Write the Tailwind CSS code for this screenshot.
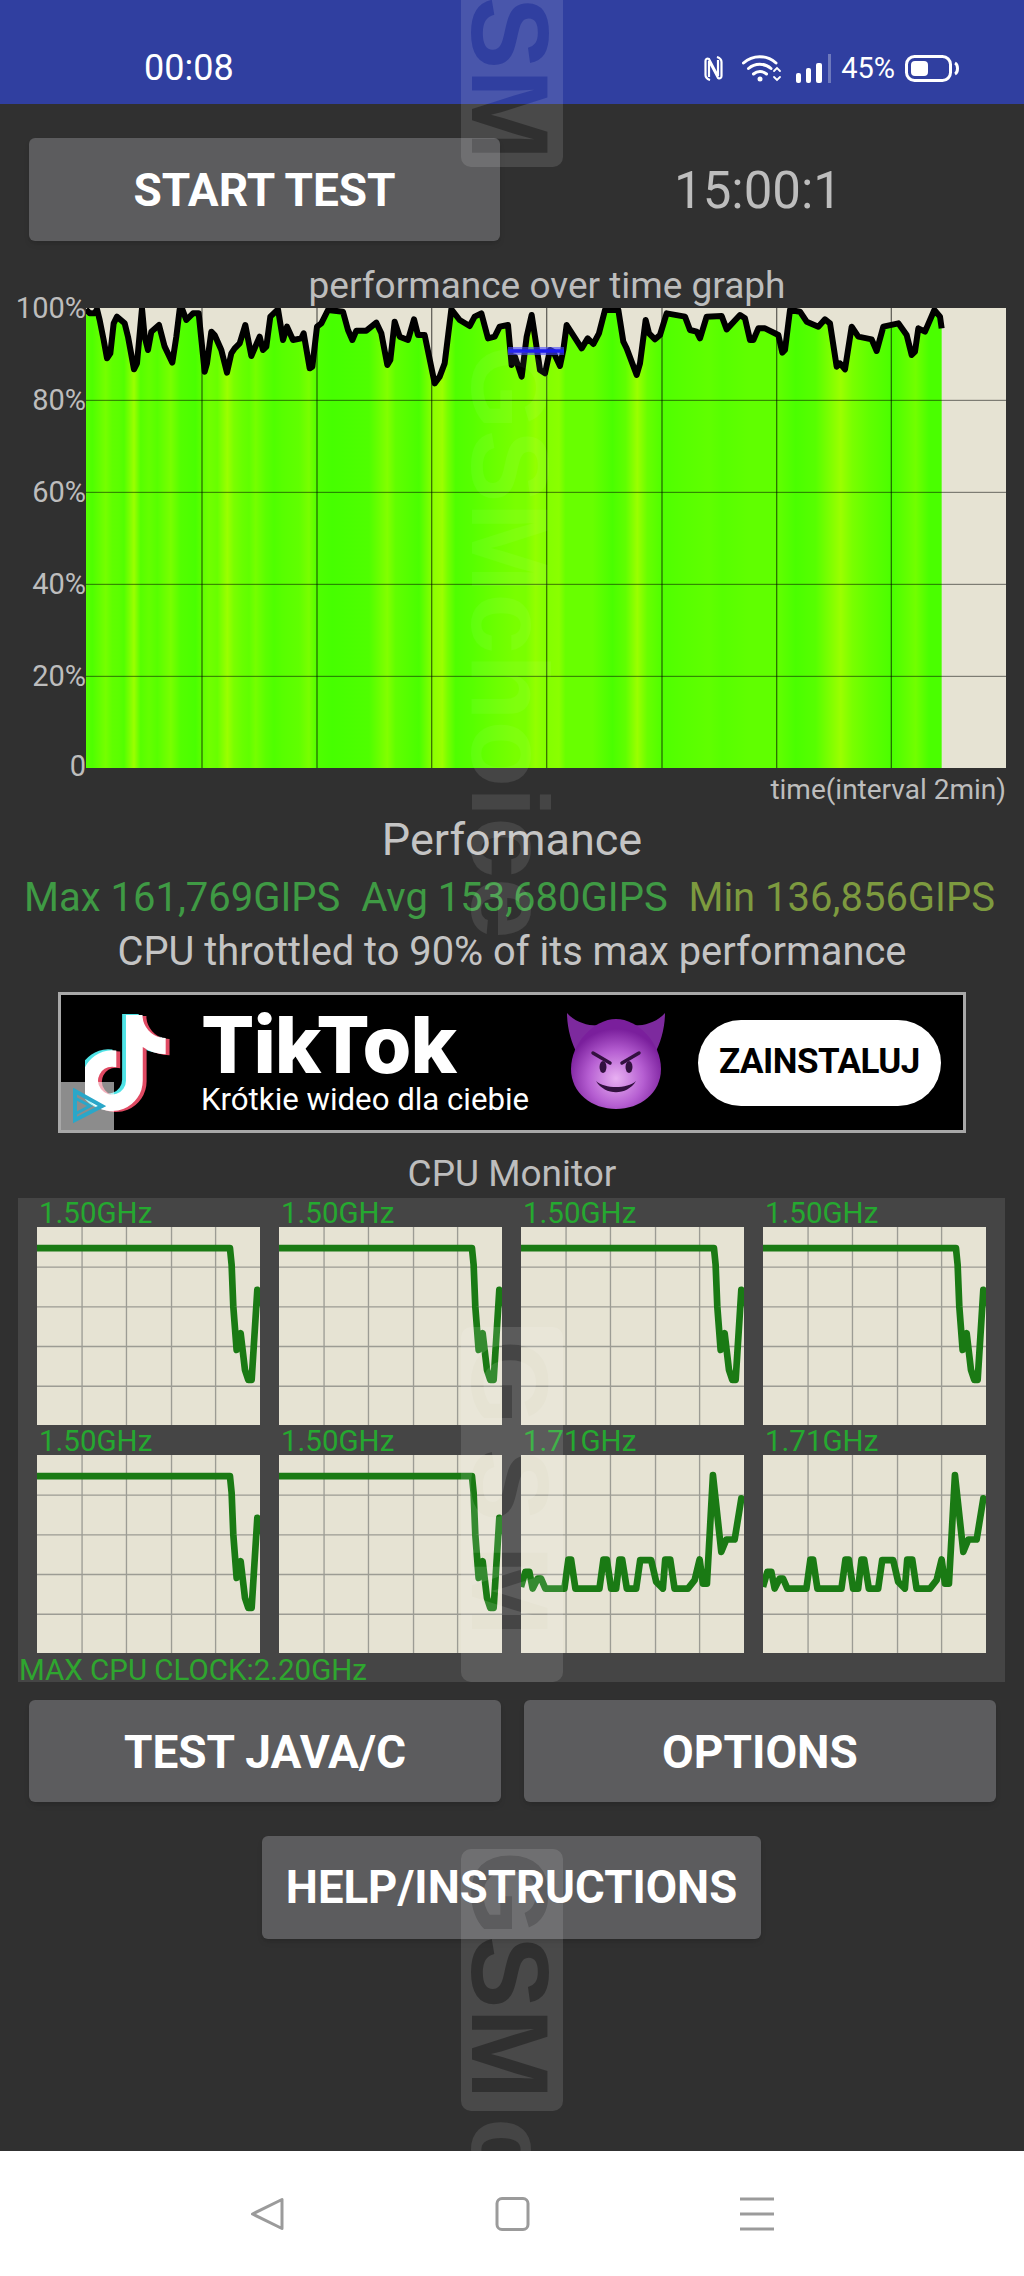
<!DOCTYPE html>
<html lang="en">

<head>
  <meta charset="UTF-8">
  <meta name="viewport" content="width=device-width, initial-scale=1.0">
  <title>CPU Throttling Test</title>
  <script src="https://cdn.jsdelivr.net/npm/@tailwindcss/browser@4"></script>
</head>

<body class="bg-[#303030] font-['Roboto',sans-serif]">
  <div class="relative w-[1024px] h-[2276px] overflow-hidden flex flex-col">

    <!-- shared cpu chart parts -->
    <svg class="absolute w-0 h-0">
      <defs>
        <g id="cpu-grid" stroke="#9c9c94" stroke-width="4" fill="none">
          <path d="M135 0V593M268 0V593M403 0V593M535 0V593M0 120H668M0 239H668M0 358H668M0 477H668" />
        </g>
        <path id="cpu-a" fill="none" stroke="#1a7a14" stroke-width="20" stroke-linejoin="round"
          d="M0 63H578L583 113L588 238L598 368L610 318L623 428L633 458H643L660 188L668 238" />
        <path id="cpu-b" fill="none" stroke="#1a7a14" stroke-width="20" stroke-linejoin="round"
          d="M0 395L13 350H25L35 400L50 370H60L73 400H130L142 313H150L163 400H235L247 313H257L270 400H285L295 313H303L317 400H345L357 315H390L405 380L425 400L432 313H447L460 400H500L520 375L535 313L545 385H557L575 60L600 290L615 253H640L660 130L668 135" />
      </defs>
    </svg>

    <!-- status bar -->
    <div class="h-[104px] shrink-0 bg-[#303fa0] flex items-center pt-[32px] pl-[144px] pr-[65px] text-white">
      <span class="text-[36px] leading-none">00:08</span>
      <div class="ml-auto flex items-center">
        <svg width="21" height="25" viewBox="0 0 21 25" fill="none" stroke="white" stroke-width="2.2">
          <path d="M7 24C4 23 2.5 22 2.5 19V5C2.5 3 4 2 6 3L15 20V4" />
          <path d="M14 1C17 2 18.5 3 18.5 6V20C18.5 22 17 23 15 22L6 5V21" />
        </svg>
        <svg class="ml-[18px]" width="40" height="27" viewBox="0 0 40 27" fill="none" stroke="white" stroke-width="3"
          stroke-linecap="round">
          <path d="M1.5 8A24 24 0 0 1 34 8" />
          <path d="M6.5 13.5A17 17 0 0 1 29 13.5" />
          <path d="M11.5 19A10 10 0 0 1 24.5 19" />
          <circle cx="18" cy="24" r="2.5" fill="white" stroke="none" />
          <path d="M32 16L35 13L38 16M32 22L35 25L38 22" stroke-width="1.8" />
        </svg>
        <svg class="ml-[14px]" width="35" height="29" viewBox="0 0 35 29" fill="white">
          <rect x="0" y="19" width="5" height="10" rx="2" />
          <rect x="10" y="14" width="5" height="15" rx="2" />
          <rect x="20" y="9" width="6" height="20" rx="2" />
          <rect x="32" y="0" width="3" height="29" fill-opacity="0.3" />
        </svg>
        <span class="ml-[10px] text-[29px] leading-none">45%</span>
        <svg class="ml-[10px]" width="54" height="27" viewBox="0 0 54 27" fill="none">
          <rect x="1.5" y="1.5" width="44" height="24" rx="8" stroke="white" stroke-width="3" />
          <rect x="6" y="6" width="17" height="15" rx="4" fill="white" />
          <path d="M50 8C52 9 52.5 11 52.5 13.5C52.5 16 52 18 50 19" stroke="white" stroke-width="3" />
        </svg>
      </div>
    </div>

    <!-- watermark -->
    <svg class="absolute left-0 top-0 z-10 pointer-events-none" width="1024" height="2151" viewBox="0 0 1024 2151">
      <mask id="wm-bands" maskUnits="userSpaceOnUse" x="0" y="0" width="1024" height="2151">
        <rect x="461" y="-20" width="102" height="187" rx="10" fill="white" />
        <rect x="461" y="1327" width="102" height="355" rx="10" fill="white" />
        <rect x="461" y="1849" width="102" height="262" rx="10" fill="white" />
        <g font-family="Liberation Sans" font-weight="700" font-size="109" fill="black">
          <text transform="translate(472,160) rotate(90)" text-anchor="end">GSM</text>
          <text transform="translate(472,1340) rotate(90)" letter-spacing="24">GSM</text>
          <text transform="translate(472,1851) rotate(90)">GSM</text>
        </g>
      </mask>
      <clipPath id="wm-on-graph"><rect width="1024" height="768" /></clipPath>
      <clipPath id="wm-on-dark"><rect y="768" width="1024" height="1383" /></clipPath>
      <rect width="1024" height="2151" fill="white" fill-opacity="0.12" mask="url(#wm-bands)" />
      <g font-family="Liberation Sans" font-weight="700" font-size="109" fill="white">
        <g clip-path="url(#wm-on-graph)" fill-opacity="0.05">
          <text transform="translate(472,345) rotate(90)">GSMchoice</text>
        </g>
        <g clip-path="url(#wm-on-dark)" fill-opacity="0.1">
          <text transform="translate(472,345) rotate(90)">GSMchoice</text>
          <text transform="translate(472,2118) rotate(90)">c</text>
        </g>
      </g>
    </svg>

    <!-- main area -->
    <div class="flex-1 flex flex-col bg-[#303030]">
      <div class="mt-[34px] pl-[29px] pr-[28px] flex items-center">
        <button class="w-[471px] h-[103px] pt-[2px] bg-[#5c5c5e] rounded-[6px] shadow-md text-white font-bold text-[46px]">START TEST</button>
        <div class="flex-1 pl-[20px] pt-[2px] text-center text-[#bdbdbd] text-[51px] leading-none">15:00:1</div>
      </div>

      <div class="mt-[25px] mb-[2px] h-[40px] pl-[70px] text-center text-[#bdbdbd] text-[37px] leading-[40px]">performance over time graph</div>

      <!-- performance graph -->
      <div class="flex h-[460px]">
        <div class="w-[86px] shrink-0 flex flex-col justify-between text-right text-[#bdbdbd] text-[29px]">
          <div class="h-0 leading-0">100%</div>
          <div class="h-0 leading-0">80%</div>
          <div class="h-0 leading-0">60%</div>
          <div class="h-0 leading-0">40%</div>
          <div class="h-0 leading-0">20%</div>
          <div class="h-0 leading-0 -translate-y-[2px]">0</div>
        </div>
        <svg width="920" height="460" viewBox="259 114 2760 1380" class="block">
          <defs>
            <linearGradient id="stripes" gradientUnits="userSpaceOnUse" x1="258" y1="0" x2="2838" y2="0"></linearGradient>
            <clipPath id="plot">
              <rect x="259" y="114" width="2760" height="1380" />
            </clipPath>
          </defs>
          <rect x="259" y="114" width="2760" height="1380" fill="#e6e3d3" />
          <path id="area" fill="url(#stripes)" />
          <g stroke="#000" stroke-opacity="0.55" stroke-width="3">
            <path d="M259 391H3019M259 667H3019M259 943H3019M259 1219H3019" />
            <path d="M607 114V1494M952 114V1494M1296 114V1494M1641 114V1494M1987 114V1494M2331 114V1494M2675 114V1494" stroke-width="4" />
          </g>
          <g clip-path="url(#plot)">
            <path id="curve" fill="none" stroke="#000" stroke-width="18" stroke-linejoin="round" />
            <path d="M1525 243H1693" stroke="#4a4aff" stroke-opacity="0.6" stroke-width="24" />
            <path d="M1525 243H1693" stroke="#1c1cf0" stroke-width="10" />
          </g>
        </svg>
      </div>

      <div class="h-[42px] pr-[18px] text-right text-[#bdbdbd] text-[28px] leading-[44px]">time(interval 2min)</div>
      <div class="mt-[6px] h-[48px] text-center text-[#c4c4c4] text-[45px] leading-[48px]">Performance</div>
      <div class="mt-[9px] h-[48px] pl-[24px] pr-[29px] flex justify-between text-[40px] leading-[50px]">
        <span class="text-[#3f9a44]">Max 161,769GIPS</span>
        <span class="text-[#3f9a44]">Avg 153,680GIPS</span>
        <span class="text-[#7d9a3f]">Min 136,856GIPS</span>
      </div>
      <div class="mt-[7px] h-[48px] text-center text-[#c4c4c4] text-[39.8px] leading-[48px]">CPU throttled to 90% of its max performance</div>

      <!-- ad banner -->
      <div class="relative z-20 mt-[16px] ml-[58px] w-[908px] h-[141px] bg-black border-[3px] border-[#a8a8a8] flex items-center">
        <svg class="ml-[24px] shrink-0" width="88" height="100" viewBox="4 1.6 18 20.8">
          <path fill="#4fe3e6" transform="translate(-0.8,-0.2)"
            d="M19.59 6.69a4.83 4.83 0 0 1-3.77-4.25V2h-3.45v13.67a2.89 2.89 0 0 1-5.2 1.74 2.89 2.89 0 0 1 2.31-4.64 2.93 2.93 0 0 1 .88.13V9.4a6.84 6.84 0 0 0-1-.05A6.33 6.33 0 0 0 5 20.1a6.34 6.34 0 0 0 10.86-4.43v-7a8.16 8.16 0 0 0 4.77 1.52v-3.4a4.85 4.85 0 0 1-1.04-.1z" />
          <path fill="#e04a63" transform="translate(0.8,0.2)"
            d="M19.59 6.69a4.83 4.83 0 0 1-3.77-4.25V2h-3.45v13.67a2.89 2.89 0 0 1-5.2 1.74 2.89 2.89 0 0 1 2.31-4.64 2.93 2.93 0 0 1 .88.13V9.4a6.84 6.84 0 0 0-1-.05A6.33 6.33 0 0 0 5 20.1a6.34 6.34 0 0 0 10.86-4.43v-7a8.16 8.16 0 0 0 4.77 1.52v-3.4a4.85 4.85 0 0 1-1.04-.1z" />
          <path fill="#fff"
            d="M19.59 6.69a4.83 4.83 0 0 1-3.77-4.25V2h-3.45v13.67a2.89 2.89 0 0 1-5.2 1.74 2.89 2.89 0 0 1 2.31-4.64 2.93 2.93 0 0 1 .88.13V9.4a6.84 6.84 0 0 0-1-.05A6.33 6.33 0 0 0 5 20.1a6.34 6.34 0 0 0 10.86-4.43v-7a8.16 8.16 0 0 0 4.77 1.52v-3.4a4.85 4.85 0 0 1-1.04-.1z" />
        </svg>
        <div class="ml-[28px] w-[365px] shrink-0 self-start mt-[17px] text-white">
          <div class="font-['Inter',sans-serif] font-extrabold text-[79px] leading-[64px] tracking-[-1px]">TikTok</div>
          <div class="mt-[4px] text-[31.2px] leading-[40px]">Krótkie wideo dla ciebie</div>
        </div>
        <svg class="shrink-0 -mt-[3px]" width="100" height="96" viewBox="0 0 100 96">
          <defs>
            <radialGradient id="face" cx="0.5" cy="0.66" r="0.55">
              <stop offset="0" stop-color="#e8b0f2" />
              <stop offset="0.55" stop-color="#b65fd2" />
              <stop offset="1" stop-color="#7a1f9c" />
            </radialGradient>
          </defs>
          <path d="M1 0C1 14 5 30 12 42L38 12C24 14 10 10 1 0Z" fill="#7d2a9e" />
          <path d="M99 0C99 14 95 30 88 42L62 12C76 14 90 10 99 0Z" fill="#7d2a9e" />
          <path d="M50 6C72 6 95 30 95 56C95 80 74 96 50 96C26 96 5 80 5 56C5 30 28 6 50 6Z" fill="url(#face)" />
          <path d="M27 40L44 50M73 40L56 50" stroke="#32113f" stroke-width="3.5" stroke-linecap="round" />
          <ellipse cx="37" cy="54" rx="3.5" ry="6" fill="#32113f" />
          <ellipse cx="63" cy="54" rx="3.5" ry="6" fill="#32113f" />
          <path d="M30 68C39 83 61 83 70 68C61 76 39 76 30 68Z" fill="#32113f" />
        </svg>
        <div class="ml-[32px] w-[243px] h-[86px] shrink-0 bg-white rounded-full flex items-center justify-center text-black font-bold text-[35px] tracking-[-0.5px]">ZAINSTALUJ</div>
        <div class="absolute left-0 bottom-0 w-[53px] h-[48px] bg-white/55 flex items-center justify-center">
          <svg width="36" height="36" viewBox="0 0 36 36" fill="none" stroke="#2aa7c9" stroke-width="4">
            <path d="M5 3V32L32 18Z" />
            <path d="M5 10L20 18L5 26" stroke-width="3" />
          </svg>
        </div>
      </div>

      <div class="relative mt-[21px] h-[40px] text-center text-[#bdbdbd] text-[37px] leading-[40px]">CPU Monitor</div>

      <!-- cpu monitor panel -->
      <div class="mt-[4px] ml-[18px] w-[987px] h-[484px] bg-[#454545] flex flex-col">
        <div class="pl-[19px] grid grid-cols-[223px_223px_223px_223px] gap-x-[19px] gap-y-[1px]">
          <div>
            <div class="h-[29px] pl-[2px] text-[#25a830] text-[29.5px] leading-[31px]">1.50GHz</div>
            <svg class="block bg-[#e6e3d3]" width="223" height="198" viewBox="0 0 668 593"><use href="#cpu-grid" /><use href="#cpu-a" /></svg>
          </div>
          <div>
            <div class="h-[29px] pl-[2px] text-[#25a830] text-[29.5px] leading-[31px]">1.50GHz</div>
            <svg class="block bg-[#e6e3d3]" width="223" height="198" viewBox="0 0 668 593"><use href="#cpu-grid" /><use href="#cpu-a" /></svg>
          </div>
          <div>
            <div class="h-[29px] pl-[2px] text-[#25a830] text-[29.5px] leading-[31px]">1.50GHz</div>
            <svg class="block bg-[#e6e3d3]" width="223" height="198" viewBox="0 0 668 593"><use href="#cpu-grid" /><use href="#cpu-a" /></svg>
          </div>
          <div>
            <div class="h-[29px] pl-[2px] text-[#25a830] text-[29.5px] leading-[31px]">1.50GHz</div>
            <svg class="block bg-[#e6e3d3]" width="223" height="198" viewBox="0 0 668 593"><use href="#cpu-grid" /><use href="#cpu-a" /></svg>
          </div>
          <div>
            <div class="h-[29px] pl-[2px] text-[#25a830] text-[29.5px] leading-[31px]">1.50GHz</div>
            <svg class="block bg-[#e6e3d3]" width="223" height="198" viewBox="0 0 668 593"><use href="#cpu-grid" /><use href="#cpu-a" /></svg>
          </div>
          <div>
            <div class="h-[29px] pl-[2px] text-[#25a830] text-[29.5px] leading-[31px]">1.50GHz</div>
            <svg class="block bg-[#e6e3d3]" width="223" height="198" viewBox="0 0 668 593"><use href="#cpu-grid" /><use href="#cpu-a" /></svg>
          </div>
          <div>
            <div class="h-[29px] pl-[2px] text-[#25a830] text-[29.5px] leading-[31px]">1.71GHz</div>
            <svg class="block bg-[#e6e3d3]" width="223" height="198" viewBox="0 0 668 593"><use href="#cpu-grid" /><use href="#cpu-b" /></svg>
          </div>
          <div>
            <div class="h-[29px] pl-[2px] text-[#25a830] text-[29.5px] leading-[31px]">1.71GHz</div>
            <svg class="block bg-[#e6e3d3]" width="223" height="198" viewBox="0 0 668 593"><use href="#cpu-grid" /><use href="#cpu-b" /></svg>
          </div>
        </div>
        <div class="pl-[1px] h-[30px] text-[#2fa62f] text-[29.5px] leading-[34px]">MAX CPU CLOCK:2.20GHz</div>
      </div>

      <div class="mt-[18px] pl-[29px] pr-[28px] flex gap-[23px]">
        <button class="flex-1 h-[102px] pt-[2px] bg-[#5c5c5e] rounded-[6px] shadow-md text-white font-bold text-[46px]">TEST JAVA/C</button>
        <button class="flex-1 h-[102px] pt-[2px] bg-[#5c5c5e] rounded-[6px] shadow-md text-white font-bold text-[46px]">OPTIONS</button>
      </div>
      <button class="mt-[34px] ml-[262px] w-[499px] h-[103px] pt-[2px] bg-[#5c5c5e] rounded-[6px] shadow-md text-white font-bold text-[45.5px]">HELP/INSTRUCTIONS</button>
    </div>

    <!-- navigation bar -->
    <div class="relative z-20 h-[125px] shrink-0 bg-white flex items-center">
      <svg class="ml-[250px]" width="34" height="34" viewBox="0 0 34 34" fill="none" stroke="#9b9b9b" stroke-width="3"
        stroke-linejoin="round">
        <path d="M32 2.5V31.5L2.5 17Z" />
      </svg>
      <svg class="ml-[211px]" width="35" height="34" viewBox="0 0 35 34" fill="none" stroke="#9b9b9b" stroke-width="3">
        <rect x="2" y="1.5" width="31" height="31" rx="5" />
      </svg>
      <svg class="ml-[209px]" width="36" height="34" viewBox="0 0 36 34" fill="none" stroke="#9b9b9b" stroke-width="3">
        <path d="M1 2H35M1 17H35M1 32H35" />
      </svg>
    </div>
  </div>

  <script>
    // curve points read from the graph, left half then right half
    const leftPts = [[259,118],[270,130],[285,130],[292,118],[300,150],[312,210],[322,265],[332,250],[342,160],[352,140],[375,160],[385,200],[403,298],[412,280],[427,115],[435,200],[445,240],[455,185],[478,165],[495,230],[518,278],[530,200],[540,118],[548,118],[560,150],[580,130],[597,130],[615,305],[622,280],[635,185],[645,195],[665,240],[682,308],[695,250],[705,235],[720,220],[737,165],[755,258],[780,200],[790,240],[800,230],[812,140],[835,118],[850,210],[862,170],[880,210],[905,205],[912,190],[930,295],[938,290],[952,170],[965,160],[985,120],[1030,125],[1045,180],[1058,210],[1070,182],[1100,182],[1130,158],[1145,190],[1163,285],[1172,270],[1185,155],[1200,200],[1225,210],[1243,148],[1255,195],[1275,195],[1305,340],[1320,320],[1335,280],[1355,118],[1380,150],[1410,168],[1425,140],[1445,130],[1465,205],[1485,200],[1500,170],[1525,165]];
    const rightPts = [[0,285],[10,260],[30,320],[45,200],[60,135],[70,200],[85,300],[100,310],[115,240],[125,245],[145,288],[155,240],[165,165],[210,235],[228,205],[245,222],[262,190],[280,120],[320,120],[335,215],[345,235],[375,315],[385,280],[402,150],[412,190],[430,208],[445,195],[465,130],[520,140],[535,180],[555,185],[565,205],[585,140],[630,138],[645,178],[685,135],[700,145],[715,210],[725,210],[740,175],[760,175],[800,195],[812,248],[820,240],[835,120],[865,125],[885,155],[920,170],[940,148],[955,160],[975,290],[985,280],[1000,298],[1020,170],[1040,200],[1080,208],[1095,243],[1115,170],[1160,160],[1185,195],[1200,255],[1210,245],[1220,175],[1240,185],[1268,120],[1285,140],[1290,175]];
    const pts = leftPts.concat(rightPts.map(p => [p[0] + 1536, p[1]]));
    const line = pts.map(p => p.join(' ')).join('L');
    document.getElementById('curve').setAttribute('d', 'M' + line);
    document.getElementById('area').setAttribute('d', 'M' + line + 'L2826 1494L259 1494Z');

    // stripe strength along the x axis, 0 = pure green, 1 = yellow green
    const bands = [[0,.2],[20,.1],[60,.55],[80,.3],[100,.25],[115,.15],[145,1],[165,.2],[190,.35],[215,.2],[255,.6],[285,.15],[330,.05],[350,.3],[370,.5],[395,.4],[425,1],[445,.6],[470,.4],[490,.3],[510,.55],[540,.25],[565,.1],[590,.2],[640,.3],[670,.6],[695,.1],[740,0],[790,.05],[850,.1],[905,.7],[930,.3],[1000,.05],[1040,.8],[1070,1],[1085,.6],[1110,.1],[1160,.2],[1220,.4],[1290,.6],[1320,.6],[1350,.9],[1380,.7],[1420,.8],[1440,.4],[1520,.4],[1580,.05],[1620,.3],[1655,1],[1685,.4],[1730,.1],[1790,.2],[1870,.3],[1910,.2],[1990,.3],[2080,.3],[2130,.05],[2190,.2],[2265,1],[2300,.6],[2350,.3],[2420,.05],[2490,.5],[2530,.05],[2580,.05]];
    const grad = document.getElementById('stripes');
    bands.forEach(([x, v]) => {
      const stop = document.createElementNS('http://www.w3.org/2000/svg', 'stop');
      stop.setAttribute('offset', x / 2580);
      stop.setAttribute('stop-color', `rgb(${Math.round(70 + v * 85)},255,0)`);
      grad.appendChild(stop);
    });
  </script>
</body>

</html>
